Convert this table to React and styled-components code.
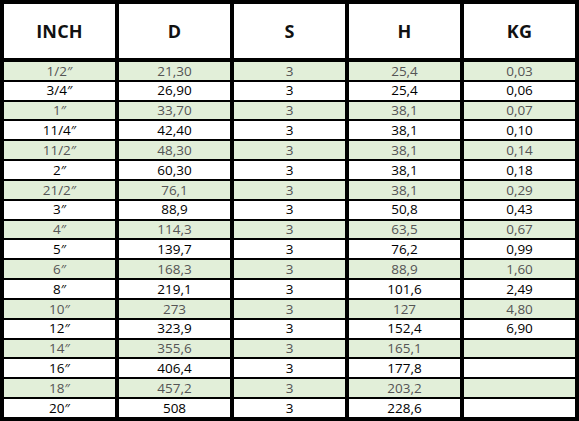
import React from 'react'
import styled, { createGlobalStyle } from 'styled-components'

const rows = [
  ['1/2″', '21,30', '3', '25,4', '0,03'],
  ['3/4″', '26,90', '3', '25,4', '0,06'],
  ['1″', '33,70', '3', '38,1', '0,07'],
  ['11/4″', '42,40', '3', '38,1', '0,10'],
  ['11/2″', '48,30', '3', '38,1', '0,14'],
  ['2″', '60,30', '3', '38,1', '0,18'],
  ['21/2″', '76,1', '3', '38,1', '0,29'],
  ['3″', '88,9', '3', '50,8', '0,43'],
  ['4″', '114,3', '3', '63,5', '0,67'],
  ['5″', '139,7', '3', '76,2', '0,99'],
  ['6″', '168,3', '3', '88,9', '1,60'],
  ['8″', '219,1', '3', '101,6', '2,49'],
  ['10″', '273', '3', '127', '4,80'],
  ['12″', '323,9', '3', '152,4', '6,90'],
  ['14″', '355,6', '3', '165,1', ''],
  ['16″', '406,4', '3', '177,8', ''],
  ['18″', '457,2', '3', '203,2', ''],
  ['20″', '508', '3', '228,6', ''],
]

const headers = ['INCH', 'D', 'S', 'H', 'KG']

const Global = createGlobalStyle`
  html, body { margin: 0; padding: 0; background: #fff; }
  body { font-family: "Open Sans", "DejaVu Sans", sans-serif; }
`

const Table = styled.div`
  box-sizing: border-box;
  width: 579px;
  height: 421px;
  background: #000;
  padding: 4px;
  display: flex;
  flex-direction: column;
  gap: 2px;
`

const Row = styled.div`
  display: grid;
  grid-template-columns: repeat(5, 1fr);
  column-gap: 4px;
  flex: 1;
  min-height: 0;
`

const HeadRow = styled(Row)`
  flex: 0 0 54px;
  margin-bottom: 2px;
`

const HeadCell = styled.div`
  background: #fff;
  display: flex;
  align-items: center;
  justify-content: center;
  font-weight: 700;
  font-size: 18px;
  color: #111;
  letter-spacing: 0.2px;
`

const Cell = styled.div`
  background: ${p => (p.green ? '#e2efd9' : '#fff')};
  color: ${p => (p.green ? '#555' : '#000')};
  display: flex;
  align-items: center;
  justify-content: center;
  font-size: 13.5px;
  line-height: 1;
  padding-top: 1px;
`

export default function App() {
  return (
    <>
      <Global />
      <Table>
        <HeadRow>
          {headers.map(h => (
            <HeadCell key={h}>{h}</HeadCell>
          ))}
        </HeadRow>
        {rows.map((r, i) => (
          <Row key={i}>
            {r.map((v, j) => (
              <Cell key={j} green={i % 2 === 0}>{v}</Cell>
            ))}
          </Row>
        ))}
      </Table>
    </>
  )
}
